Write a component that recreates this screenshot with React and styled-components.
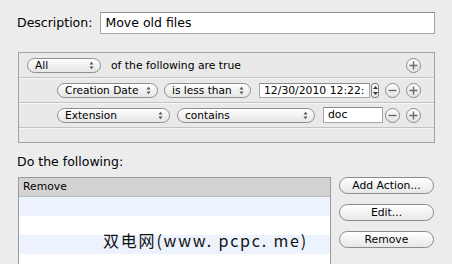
import React from 'react';
import styled, { createGlobalStyle } from 'styled-components';

const Global = createGlobalStyle`
  html, body {
    margin: 0;
    padding: 0;
    background: #ececec;
  }
  body {
    font-family: "DejaVu Sans", "Lucida Grande", sans-serif;
    color: #000;
  }
`

const Window = styled.div`
  position: relative;
  width: 452px;
  height: 264px;
  overflow: hidden;
  background: #ececec;
  padding: 11px 17px 0 17px;
  box-sizing: border-box;
`

const DescRow = styled.div`
  display: flex;
  align-items: center;
  height: 23px;
`

const Label = styled.div`
  font-size: 12.5px;
  line-height: 16px;
`

const DescField = styled.div`
  margin-left: 8px;
  width: 335px;
  height: 22px;
  box-sizing: border-box;
  background: #fff;
  border: 1px solid #a6a6a6;
  border-top-color: #8c8c8c;
  font-size: 12.5px;
  line-height: 20px;
  padding-left: 4px;
`

const Conditions = styled.div`
  margin: 18px 0 0 1px;
  width: 417px;
  height: 91px;
  box-sizing: border-box;
  border: 1px solid #a3a3a3;
  background: #e9e9e9;
  display: flex;
  flex-direction: column;
`

const CondRow = styled.div`
  display: flex;
  align-items: center;
  height: 25px;
  flex: none;
  box-sizing: border-box;
  padding-left: ${p => p.indent}px;
  padding-right: 13px;
  border-bottom: 1px solid #c2c2c2;
  box-shadow: 0 1px 0 #f7f7f7;
`

const Popup = styled.div`
  position: relative;
  width: ${p => p.w}px;
  height: 15px;
  margin-left: ${p => p.gap || 0}px;
  box-sizing: border-box;
  border: 1px solid #8f8f8f;
  border-radius: 8px;
  background: linear-gradient(#ffffff, #f1f1f1 50%, #e6e6e6);
  font-size: 10.6px;
  line-height: 13px;
  padding-left: 7px;
  white-space: nowrap;
  flex: none;
`

const Arrows = styled.svg`
  position: absolute;
  right: 6px;
  top: 2px;
`

const Text = styled.div`
  font-size: 10.8px;
  margin-left: 10px;
  white-space: nowrap;
`

const Field = styled.div`
  width: ${p => p.w}px;
  height: ${p => p.h}px;
  margin-left: ${p => p.gap || 0}px;
  box-sizing: border-box;
  background: #fff;
  border: 1px solid #a6a6a6;
  border-top-color: #8c8c8c;
  font-size: 10.8px;
  line-height: ${p => p.h - 2}px;
  padding-left: 4px;
  white-space: nowrap;
  overflow: hidden;
  flex: none;
`

const Stepper = styled.div`
  margin-left: 1px;
  width: 8px;
  height: 15px;
  box-sizing: border-box;
  border: 1px solid #7d7d7d;
  border-radius: 3px;
  background: linear-gradient(#fff, #e4e4e4);
  display: flex;
  flex-direction: column;
  justify-content: space-between;
  align-items: center;
  padding: 2px 0;
  flex: none;
`

const Controls = styled.div`
  margin-left: auto;
  display: flex;
  gap: 6px;
`

const Circle = styled.div`
  width: 15px;
  height: 15px;
  box-sizing: border-box;
  border: 1px solid #8e8e8e;
  border-radius: 50%;
  background: linear-gradient(#fdfdfd, #e3e3e3);
  display: flex;
  align-items: center;
  justify-content: center;
`

const Section = styled.div`
  margin-top: 11px;
  font-size: 12.5px;
  line-height: 16px;
`

const Bottom = styled.div`
  display: flex;
  margin: 7px 0 0 1px;
`

const List = styled.div`
  width: 313px;
  height: 100px;
  box-sizing: border-box;
  border: 1px solid #9a9a9a;
  border-bottom: none;
  background: #fff;
`

const Header = styled.div`
  height: 18px;
  background: #d3d3d3;
  border-bottom: 1px solid #bdbdbd;
  font-size: 10.8px;
  line-height: 18px;
  padding-left: 4px;
`

const ListRow = styled.div`
  height: 19px;
  background: ${p => (p.alt ? '#edf3fe' : '#ffffff')};
`

const Buttons = styled.div`
  margin-left: 8px;
  display: flex;
  flex-direction: column;
  gap: 10px;
`

const Button = styled.div`
  width: 95px;
  height: 17px;
  box-sizing: border-box;
  border: 1px solid #8a8a8a;
  border-radius: 9px;
  background: linear-gradient(#ffffff, #f3f3f3 50%, #e8e8e8);
  font-size: 10.8px;
  line-height: 15px;
  text-align: center;
`

const Watermark = styled.div`
  position: absolute;
  left: 103px;
  top: 230px;
  font-family: "Noto Sans CJK SC", sans-serif;
  font-size: 16px;
  line-height: 20px;
  color: #111;
  white-space: nowrap;
  letter-spacing: 1.8px;
`

const UpDown = () => (
  <Arrows width="5" height="9" viewBox="0 0 5 9">
    <path d="M0.5 3.5 L2.5 0.8 L4.5 3.5 Z" fill="#555" />
    <path d="M0.5 5.5 L2.5 8.2 L4.5 5.5 Z" fill="#555" />
  </Arrows>
)

const Select = ({ w, gap, children }) => (
  <Popup w={w} gap={gap}>
    {children}
    <UpDown />
  </Popup>
)

const Plus = () => (
  <Circle>
    <svg width="9" height="9" viewBox="0 0 9 9">
      <path d="M4.5 0.5 V8.5 M0.5 4.5 H8.5" stroke="#6b6b6b" strokeWidth="1.4" />
    </svg>
  </Circle>
)

const Minus = () => (
  <Circle>
    <svg width="9" height="9" viewBox="0 0 9 9">
      <path d="M0.5 4.5 H8.5" stroke="#6b6b6b" strokeWidth="1.4" />
    </svg>
  </Circle>
)

const App = () => {
  return (
    <Window>
      <Global />
      <DescRow>
        <Label>Description:</Label>
        <DescField>Move old files</DescField>
      </DescRow>

      <Conditions>
        <CondRow indent={8}>
          <Select w={74}>All</Select>
          <Text>of the following are true</Text>
          <Controls><Plus /></Controls>
        </CondRow>
        <CondRow indent={38}>
          <Select w={101}>Creation Date</Select>
          <Select w={87} gap={6}>is less than</Select>
          <Field w={111} h={15} gap={8}>12/30/2010 12:22:</Field>
          <Stepper>
            <svg width="5" height="3" viewBox="0 0 5 3"><path d="M0 3 L2.5 0 L5 3 Z" fill="#333" /></svg>
            <svg width="5" height="3" viewBox="0 0 5 3"><path d="M0 0 L2.5 3 L5 0 Z" fill="#333" /></svg>
          </Stepper>
          <Controls><Minus /><Plus /></Controls>
        </CondRow>
        <CondRow indent={38}>
          <Select w={113}>Extension</Select>
          <Select w={138} gap={7}>contains</Select>
          <Field w={60} h={16} gap={8}>doc</Field>
          <Controls><Minus /><Plus /></Controls>
        </CondRow>
      </Conditions>

      <Section>Do the following:</Section>

      <Bottom>
        <List>
          <Header>Remove</Header>
          <ListRow alt />
          <ListRow />
          <ListRow alt />
          <ListRow />
        </List>
        <Buttons>
          <Button>Add Action...</Button>
          <Button>Edit...</Button>
          <Button>Remove</Button>
        </Buttons>
      </Bottom>

      <Watermark>双电网(www. pcpc. me)</Watermark>
    </Window>
  );
}

export default App;
